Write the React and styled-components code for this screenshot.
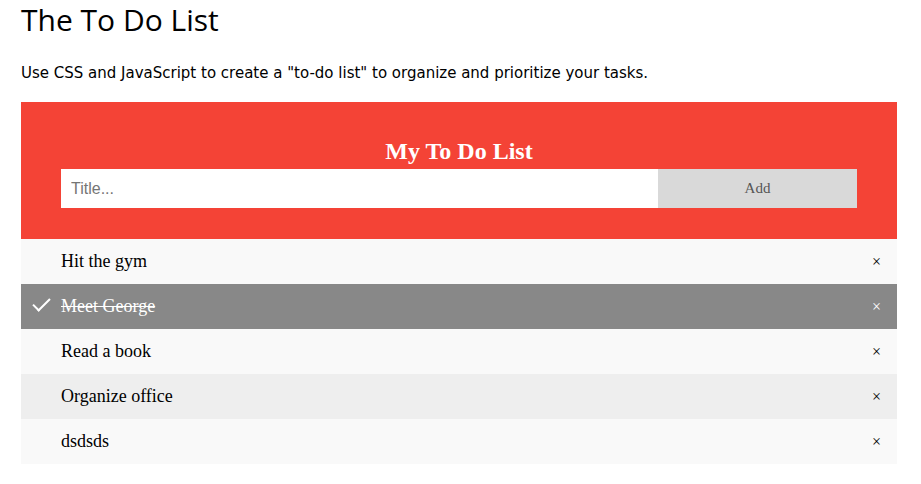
import React, { useState } from "react";
import styled, { createGlobalStyle } from "styled-components";

const GlobalStyle = createGlobalStyle`
  body {
    margin: 0;
    padding: 0 24px 0 21px;
    background: #fff;
    font-family: "Liberation Serif", serif;
  }
  * { box-sizing: border-box; }
`;

const PageTitle = styled.h1`
  font-family: "Open Sans", "Noto Sans", sans-serif;
  font-weight: 400;
  font-size: 30px;
  line-height: 40px;
  margin: 0 0 23px;
  color: #000;
`;

const Intro = styled.p`
  font-family: "DejaVu Sans", Verdana, sans-serif;
  font-size: 15px;
  line-height: 20px;
  margin: 0 0 19px;
  color: #000;
`;

const Header = styled.div`
  background: #f44336;
  padding: 30px 40px 31px;
  color: #fff;
  text-align: center;
`;

const HeaderTitle = styled.h2`
  font-family: "Liberation Serif", serif;
  font-weight: 700;
  font-size: 24px;
  line-height: 26px;
  margin: 6px 0 5px;
`;

const Form = styled.div`
  display: flex;
`;

const TitleInput = styled.input`
  width: 75%;
  height: 39px;
  border: none;
  border-radius: 0;
  padding: 10px;
  font-family: "Liberation Sans", Arial, sans-serif;
  font-size: 16px;
  outline: none;
  &::placeholder { color: #757575; }
`;

const AddButton = styled.span`
  width: 25%;
  height: 39px;
  display: flex;
  align-items: center;
  justify-content: center;
  background: #d9d9d9;
  color: #555;
  font-family: "Liberation Serif", serif;
  font-size: 15px;
  cursor: pointer;
`;

const List = styled.ul`
  margin: 0;
  padding: 0;
  list-style: none;
`;

const Item = styled.li`
  position: relative;
  padding: 12px 8px 12px 40px;
  font-family: "Liberation Serif", serif;
  font-size: 18px;
  line-height: 21px;
  cursor: pointer;
  background: ${(p) => (p.checked ? "#888" : p.odd ? "#f9f9f9" : "#eee")};
  color: ${(p) => (p.checked ? "#fff" : "#000")};
  text-decoration: ${(p) => (p.checked ? "line-through" : "none")};

  &::before {
    content: "";
    display: ${(p) => (p.checked ? "block" : "none")};
    position: absolute;
    border-color: #fff;
    border-style: solid;
    border-width: 0 2px 2px 0;
    top: 10px;
    left: 16px;
    transform: rotate(45deg);
    height: 15px;
    width: 7px;
  }
`;

const Close = styled.span`
  position: absolute;
  right: 0;
  top: 0;
  padding: 12px 16px;
  font-family: "Liberation Serif", serif;
  font-size: 16px;
  line-height: 21px;
  color: ${(p) => (p.checked ? "#fff" : "#000")};
`;

const initial = [
  { text: "Hit the gym", checked: false },
  { text: "Meet George", checked: true },
  { text: "Read a book", checked: false },
  { text: "Organize office", checked: false },
  { text: "dsdsds", checked: false },
];

export default function App() {
  const [items, setItems] = useState(initial);
  const [title, setTitle] = useState("");

  const add = () => {
    if (!title.trim()) return;
    setItems([...items, { text: title, checked: false }]);
    setTitle("");
  };

  return (
    <>
      <GlobalStyle />
      <PageTitle>The To Do List</PageTitle>
      <Intro>Use CSS and JavaScript to create a "to-do list" to organize and prioritize your tasks.</Intro>
      <Header>
        <HeaderTitle>My To Do List</HeaderTitle>
        <Form>
          <TitleInput
            placeholder="Title..."
            value={title}
            onChange={(e) => setTitle(e.target.value)}
          />
          <AddButton onClick={add}>Add</AddButton>
        </Form>
      </Header>
      <List>
        {items.map((it, i) => (
          <Item
            key={i}
            odd={i % 2 === 0}
            checked={it.checked}
            onClick={() =>
              setItems(items.map((x, j) => (j === i ? { ...x, checked: !x.checked } : x)))
            }
          >
            {it.text}
            <Close
              checked={it.checked}
              onClick={(e) => {
                e.stopPropagation();
                setItems(items.filter((_, j) => j !== i));
              }}
            >
              ×
            </Close>
          </Item>
        ))}
      </List>
    </>
  );
}
